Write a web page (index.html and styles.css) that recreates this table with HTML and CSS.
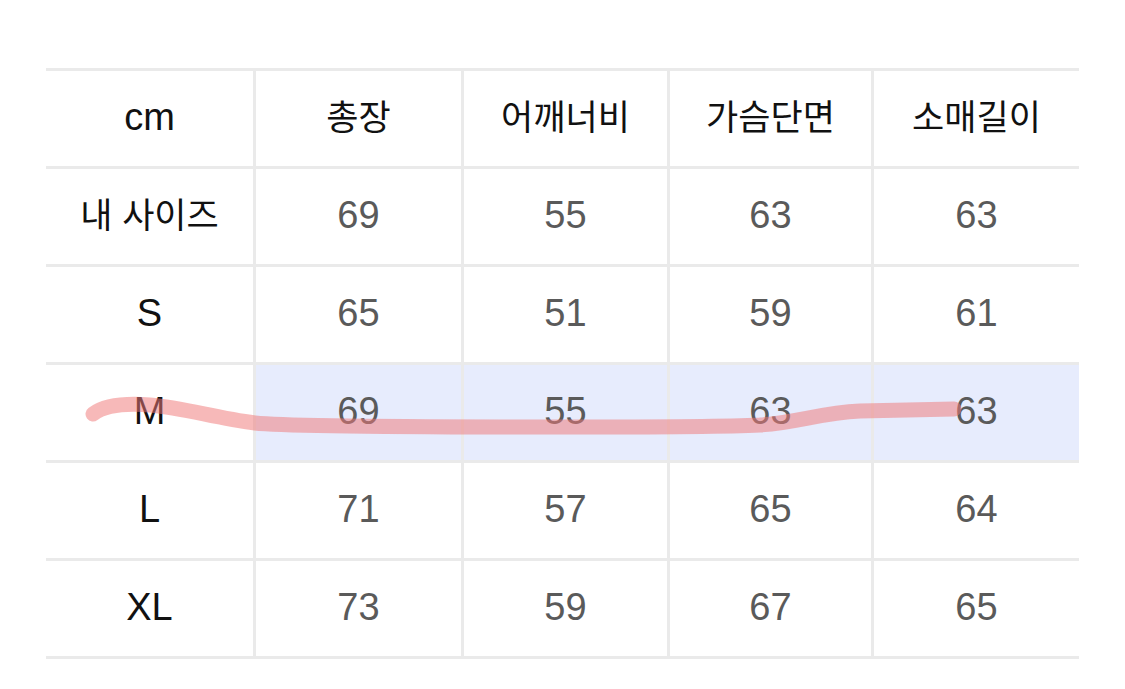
FILE: index.html
```html
<!DOCTYPE html>
<html lang="ko">
<head>
<meta charset="utf-8">
<link rel="stylesheet" href="styles.css">
</head>
<body>
<div class="page">
  <div class="size-table">
    <div class="cell head lat">cm</div>
    <div class="cell head ko">총장</div>
    <div class="cell head ko">어깨너비</div>
    <div class="cell head ko">가슴단면</div>
    <div class="cell head ko">소매길이</div>

    <div class="cell head ko">내 사이즈</div>
    <div class="cell num">69</div>
    <div class="cell num">55</div>
    <div class="cell num">63</div>
    <div class="cell num">63</div>

    <div class="cell head lat">S</div>
    <div class="cell num">65</div>
    <div class="cell num">51</div>
    <div class="cell num">59</div>
    <div class="cell num">61</div>

    <div class="cell head lat">M</div>
    <div class="cell num hl">69</div>
    <div class="cell num hl">55</div>
    <div class="cell num hl">63</div>
    <div class="cell num hl">63</div>

    <div class="cell head lat">L</div>
    <div class="cell num">71</div>
    <div class="cell num">57</div>
    <div class="cell num">65</div>
    <div class="cell num">64</div>

    <div class="cell head lat">XL</div>
    <div class="cell num">73</div>
    <div class="cell num">59</div>
    <div class="cell num">67</div>
    <div class="cell num">65</div>
  </div>
  <svg class="scribble" width="1125" height="689" viewBox="0 0 1125 689" aria-hidden="true">
    <path d="M93,414 C105,405 125,403 150,405 C185,408 215,418 255,423 C300,428 700,428 760,425 C800,422 820,413 860,411 L954,409" />
  </svg>
</div>
</body>
</html>
```

FILE: styles.css
```css
html, body {
  margin: 0;
  padding: 0;
  background: #ffffff;
}

.page {
  position: relative;
  width: 1125px;
  height: 689px;
  padding: 68px 0 0 46px;
  box-sizing: border-box;
  font-family: "Liberation Sans", "Noto Sans CJK KR", sans-serif;
}

.size-table {
  display: grid;
  grid-template-columns: 210px 208px 206px 204px 205px;
  grid-auto-rows: 98px;
  width: 1033px;
  border-top: 3px solid #eaeaea;
}

.cell {
  display: flex;
  align-items: center;
  justify-content: center;
  border-bottom: 3px solid #eaeaea;
  border-right: 3px solid #eaeaea;
  padding-bottom: 3px;
  box-sizing: border-box;
}

.cell:nth-child(5n) {
  border-right: none;
}

.head {
  color: #111111;
}

.lat {
  font-size: 38px;
  padding-bottom: 2px;
}

.ko {
  font-size: 35px;
  padding-bottom: 8px;
}

.num {
  color: #5a5a5a;
  font-size: 38px;
}

.hl {
  background: #e7ecfd;
}

.scribble {
  position: absolute;
  left: 0;
  top: 0;
  pointer-events: none;
}

.scribble path {
  fill: none;
  stroke: #f07878;
  stroke-opacity: 0.52;
  stroke-width: 15;
  stroke-linecap: round;
  stroke-linejoin: round;
}
```
